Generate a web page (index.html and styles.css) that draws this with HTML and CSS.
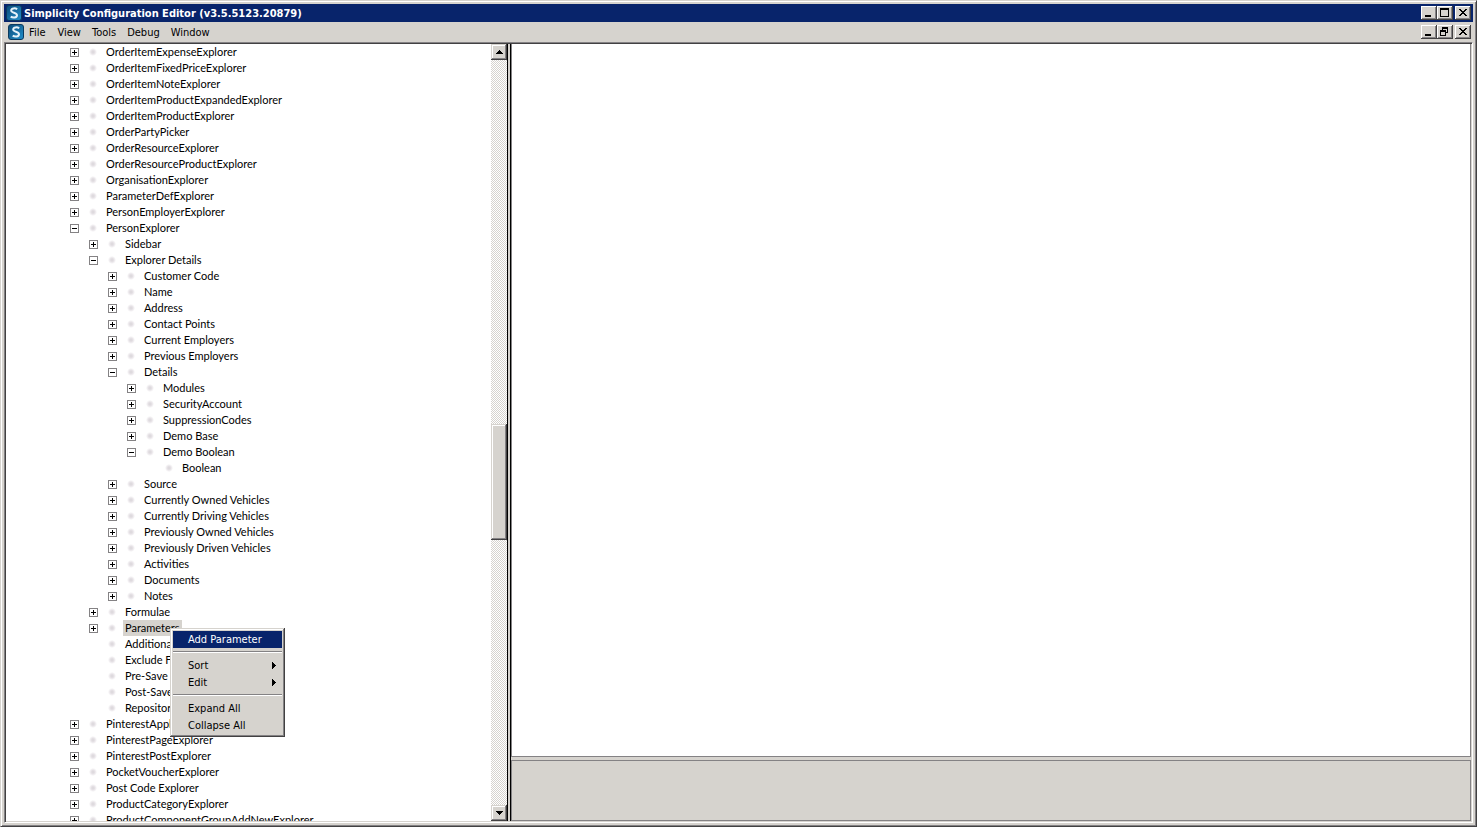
FILE: index.html
```html
<!DOCTYPE html>
<html lang="en">
<head>
    <meta charset="UTF-8">
    <meta name="viewport" content="width=device-width, initial-scale=1.0">
    <title>Simplicity Configuration Editor</title>
    <link rel="stylesheet" href="styles.css">
</head>
<body>
    <svg class="defs" width="0" height="0" aria-hidden="true">
        <linearGradient id="blue" x1="0" y1="0" x2="1" y2="1">
            <stop offset="0" stop-color="#0b4a78"/>
            <stop offset="1" stop-color="#2391cc"/>
        </linearGradient>
        <symbol id="logo" viewBox="0 0 16 16">
            <rect x="0.5" y="0.5" width="15" height="15" rx="2.5" fill="url(#blue)" stroke="#0c3a5e"/>
            <path d="M11.2 4.2C9.5 3 5.2 2.8 5.2 5.5C5.2 8.3 11 7.3 11 10.3C11 13.2 6.5 12.9 4.7 11.6" fill="none" stroke="#e4f2fa" stroke-width="2"/>
        </symbol>
        <symbol id="close" viewBox="0 0 12 10">
            <path d="M2 1h2v1h1v1h2V2h1V1h2v1H9v1H8v1H7v1h1v1h1v1h1v1H8V7H7V6H5v1H4v1H2V7h1V6h1V5h1V4H4V3H3V2H2z"/>
        </symbol>
    </svg>

    <div class="window">
        <header class="titlebar">
            <svg class="logo"><use href="#logo"/></svg>
            <h1 class="title">Simplicity Configuration Editor (v3.5.5123.20879)</h1>
            <div class="controls">
                <button class="control" aria-label="Minimize"><svg viewBox="0 0 12 10"><path d="M2 7h6v2H2z"/></svg></button>
                <button class="control" aria-label="Maximize"><svg viewBox="0 0 12 10"><path d="M1 0h9v9H1zM2 2v6h7V2z" fill-rule="evenodd"/></svg></button>
                <button class="control control-close" aria-label="Close"><svg><use href="#close"/></svg></button>
            </div>
        </header>

        <nav class="menubar">
            <svg class="logo"><use href="#logo"/></svg>
            <button class="menu">File</button>
            <button class="menu">View</button>
            <button class="menu">Tools</button>
            <button class="menu">Debug</button>
            <button class="menu">Window</button>
            <div class="controls">
                <button class="control" aria-label="Minimize child"><svg viewBox="0 0 12 10"><path d="M2 7h6v2H2z"/></svg></button>
                <button class="control" aria-label="Restore child"><svg viewBox="0 0 12 10"><path d="M3 0h6v6H7V5h1V2H4v1H3zM1 3h6v6H1zM2 5v3h4V5z" fill-rule="evenodd"/></svg></button>
                <button class="control control-close" aria-label="Close child"><svg><use href="#close"/></svg></button>
            </div>
        </nav>

        <main class="client">
            <section class="tree-pane">
                <ul class="tree">
                    <li><div class="row"><button class="toggle plus" aria-label="Expand"></button><i class="dot"></i><span class="label">OrderItemExpenseExplorer</span></div></li>
                    <li><div class="row"><button class="toggle plus" aria-label="Expand"></button><i class="dot"></i><span class="label">OrderItemFixedPriceExplorer</span></div></li>
                    <li><div class="row"><button class="toggle plus" aria-label="Expand"></button><i class="dot"></i><span class="label">OrderItemNoteExplorer</span></div></li>
                    <li><div class="row"><button class="toggle plus" aria-label="Expand"></button><i class="dot"></i><span class="label">OrderItemProductExpandedExplorer</span></div></li>
                    <li><div class="row"><button class="toggle plus" aria-label="Expand"></button><i class="dot"></i><span class="label">OrderItemProductExplorer</span></div></li>
                    <li><div class="row"><button class="toggle plus" aria-label="Expand"></button><i class="dot"></i><span class="label">OrderPartyPicker</span></div></li>
                    <li><div class="row"><button class="toggle plus" aria-label="Expand"></button><i class="dot"></i><span class="label">OrderResourceExplorer</span></div></li>
                    <li><div class="row"><button class="toggle plus" aria-label="Expand"></button><i class="dot"></i><span class="label">OrderResourceProductExplorer</span></div></li>
                    <li><div class="row"><button class="toggle plus" aria-label="Expand"></button><i class="dot"></i><span class="label">OrganisationExplorer</span></div></li>
                    <li><div class="row"><button class="toggle plus" aria-label="Expand"></button><i class="dot"></i><span class="label">ParameterDefExplorer</span></div></li>
                    <li><div class="row"><button class="toggle plus" aria-label="Expand"></button><i class="dot"></i><span class="label">PersonEmployerExplorer</span></div></li>
                    <li>
                        <div class="row"><button class="toggle" aria-label="Collapse"></button><i class="dot"></i><span class="label">PersonExplorer</span></div>
                        <ul>
                            <li><div class="row"><button class="toggle plus" aria-label="Expand"></button><i class="dot"></i><span class="label">Sidebar</span></div></li>
                            <li>
                                <div class="row"><button class="toggle" aria-label="Collapse"></button><i class="dot"></i><span class="label">Explorer Details</span></div>
                                <ul>
                                    <li><div class="row"><button class="toggle plus" aria-label="Expand"></button><i class="dot"></i><span class="label">Customer Code</span></div></li>
                                    <li><div class="row"><button class="toggle plus" aria-label="Expand"></button><i class="dot"></i><span class="label">Name</span></div></li>
                                    <li><div class="row"><button class="toggle plus" aria-label="Expand"></button><i class="dot"></i><span class="label">Address</span></div></li>
                                    <li><div class="row"><button class="toggle plus" aria-label="Expand"></button><i class="dot"></i><span class="label">Contact Points</span></div></li>
                                    <li><div class="row"><button class="toggle plus" aria-label="Expand"></button><i class="dot"></i><span class="label">Current Employers</span></div></li>
                                    <li><div class="row"><button class="toggle plus" aria-label="Expand"></button><i class="dot"></i><span class="label">Previous Employers</span></div></li>
                                    <li>
                                        <div class="row"><button class="toggle" aria-label="Collapse"></button><i class="dot"></i><span class="label">Details</span></div>
                                        <ul>
                                            <li><div class="row"><button class="toggle plus" aria-label="Expand"></button><i class="dot"></i><span class="label">Modules</span></div></li>
                                            <li><div class="row"><button class="toggle plus" aria-label="Expand"></button><i class="dot"></i><span class="label">SecurityAccount</span></div></li>
                                            <li><div class="row"><button class="toggle plus" aria-label="Expand"></button><i class="dot"></i><span class="label">SuppressionCodes</span></div></li>
                                            <li><div class="row"><button class="toggle plus" aria-label="Expand"></button><i class="dot"></i><span class="label">Demo Base</span></div></li>
                                            <li>
                                                <div class="row"><button class="toggle" aria-label="Collapse"></button><i class="dot"></i><span class="label">Demo Boolean</span></div>
                                                <ul>
                                                    <li><div class="row leaf"><i class="dot"></i><span class="label">Boolean</span></div></li>
                                                </ul>
                                            </li>
                                        </ul>
                                    </li>
                                    <li><div class="row"><button class="toggle plus" aria-label="Expand"></button><i class="dot"></i><span class="label">Source</span></div></li>
                                    <li><div class="row"><button class="toggle plus" aria-label="Expand"></button><i class="dot"></i><span class="label">Currently Owned Vehicles</span></div></li>
                                    <li><div class="row"><button class="toggle plus" aria-label="Expand"></button><i class="dot"></i><span class="label">Currently Driving Vehicles</span></div></li>
                                    <li><div class="row"><button class="toggle plus" aria-label="Expand"></button><i class="dot"></i><span class="label">Previously Owned Vehicles</span></div></li>
                                    <li><div class="row"><button class="toggle plus" aria-label="Expand"></button><i class="dot"></i><span class="label">Previously Driven Vehicles</span></div></li>
                                    <li><div class="row"><button class="toggle plus" aria-label="Expand"></button><i class="dot"></i><span class="label">Activities</span></div></li>
                                    <li><div class="row"><button class="toggle plus" aria-label="Expand"></button><i class="dot"></i><span class="label">Documents</span></div></li>
                                    <li><div class="row"><button class="toggle plus" aria-label="Expand"></button><i class="dot"></i><span class="label">Notes</span></div></li>
                                </ul>
                            </li>
                            <li><div class="row"><button class="toggle plus" aria-label="Expand"></button><i class="dot"></i><span class="label">Formulae</span></div></li>
                            <li class="has-popup">
                                <div class="row"><button class="toggle plus" aria-label="Expand"></button><i class="dot"></i><span class="label selected">Parameters</span></div>
                                <div class="popup">
                                    <button class="item active">Add Parameter</button>
                                    <hr>
                                    <button class="item">Sort<svg class="arrow" viewBox="0 0 4 7"><path d="M0 0h1v1h1v1h1v1h1v1H3v1H2v1H1v1H0z"/></svg></button>
                                    <button class="item">Edit<svg class="arrow" viewBox="0 0 4 7"><path d="M0 0h1v1h1v1h1v1h1v1H3v1H2v1H1v1H0z"/></svg></button>
                                    <hr>
                                    <button class="item">Expand All</button>
                                    <button class="item">Collapse All</button>
                                </div>
                            </li>
                            <li><div class="row leaf"><i class="dot"></i><span class="label">Additional</span></div></li>
                            <li><div class="row leaf"><i class="dot"></i><span class="label">Exclude From</span></div></li>
                            <li><div class="row leaf"><i class="dot"></i><span class="label">Pre-Save</span></div></li>
                            <li><div class="row leaf"><i class="dot"></i><span class="label">Post-Save</span></div></li>
                            <li><div class="row leaf"><i class="dot"></i><span class="label">Repository</span></div></li>
                        </ul>
                    </li>
                    <li><div class="row"><button class="toggle plus" aria-label="Expand"></button><i class="dot"></i><span class="label">PinterestApplExplorer</span></div></li>
                    <li><div class="row"><button class="toggle plus" aria-label="Expand"></button><i class="dot"></i><span class="label">PinterestPageExplorer</span></div></li>
                    <li><div class="row"><button class="toggle plus" aria-label="Expand"></button><i class="dot"></i><span class="label">PinterestPostExplorer</span></div></li>
                    <li><div class="row"><button class="toggle plus" aria-label="Expand"></button><i class="dot"></i><span class="label">PocketVoucherExplorer</span></div></li>
                    <li><div class="row"><button class="toggle plus" aria-label="Expand"></button><i class="dot"></i><span class="label">Post Code Explorer</span></div></li>
                    <li><div class="row"><button class="toggle plus" aria-label="Expand"></button><i class="dot"></i><span class="label">ProductCategoryExplorer</span></div></li>
                    <li><div class="row"><button class="toggle plus" aria-label="Expand"></button><i class="dot"></i><span class="label">ProductComponentGroupAddNewExplorer</span></div></li>
                </ul>
                <div class="scrollbar">
                    <button class="scroll-button" aria-label="Scroll up"><svg viewBox="0 0 7 4"><path d="M3 0h1v1h1v1h1v1h1v1H0V3h1V2h1V1h1z"/></svg></button>
                    <div class="track-above"></div>
                    <div class="thumb"></div>
                    <div class="track-below"></div>
                    <button class="scroll-button" aria-label="Scroll down"><svg viewBox="0 0 7 4"><path d="M0 0h7v1H6v1H5v1H4v1H3V3H2V2H1V1H0z"/></svg></button>
                </div>
            </section>
            <div class="splitter"></div>
            <section class="right-pane">
                <div class="editor"></div>
                <div class="info"></div>
            </section>
        </main>
    </div>
</body>
</html>
```

FILE: styles.css
```css
* {
    box-sizing: border-box;
}

body {
    margin: 0;
    background: #d6d3ce;
    color: #000;
    font-family: Lato, Arial, sans-serif;
    font-size: 11px;
}

button {
    margin: 0;
    padding: 0;
    border: 0;
    background: none;
    color: inherit;
    font: inherit;
}

svg {
    display: block;
    shape-rendering: crispEdges;
}

ul {
    margin: 0;
    padding: 0;
    list-style: none;
}

.defs {
    position: absolute;
}

/* Window frame */
.window {
    display: flex;
    flex-direction: column;
    height: 100vh;
    padding: 3px;
    border: 1px solid;
    border-color: #d6d3ce #424142 #424142 #d6d3ce;
    box-shadow: inset 1px 1px #fff, inset -1px -1px #848284;
}

.titlebar,
.menubar {
    display: flex;
    align-items: center;
    flex: none;
    padding: 0 2px;
    font-family: "DejaVu Sans Condensed", Tahoma, sans-serif;
}

.titlebar {
    height: 18px;
    background: #08246b;
    color: #fff;
}

.menubar {
    height: 20px;
}

.logo {
    flex: none;
    width: 16px;
    height: 16px;
    shape-rendering: auto;
}

.menubar .logo {
    margin: 0 -1px 0 2px;
}

.title {
    margin: 0 0 0 2px;
    font-size: 11px;
    font-weight: bold;
    white-space: nowrap;
}

.menu {
    height: 18px;
    padding: 0 6px 0 5px;
}

.menubar .logo + .menu {
    padding: 0 7px 0 6px;
}

.controls {
    display: flex;
    margin-left: auto;
}

.control {
    width: 16px;
    height: 14px;
    padding: 2px;
    background: #d6d3ce;
    box-shadow: inset -1px -1px #424142, inset 1px 1px #fff, inset -2px -2px #848284;
}

.control-close {
    margin-left: 2px;
}

.control svg {
    width: 12px;
    height: 10px;
}

/* Client area */
.client {
    display: flex;
    flex: 1;
    min-height: 0;
    border: 1px solid;
    border-color: #848284 #fff #fff #848284;
    box-shadow: inset 1px 1px #424142, inset -1px -1px #d6d3ce;
    padding: 1px;
}

.tree-pane {
    display: flex;
    flex: 0 0 34.2%;
    min-width: 0;
    background: #fff;
}

.tree {
    flex: 1;
    min-width: 0;
    padding-left: 64px;
    overflow: hidden;
}

.tree ul {
    padding-left: 19px;
}

.row {
    display: flex;
    align-items: center;
    height: 16px;
}

.leaf {
    padding-left: 9px;
}

.toggle {
    flex: none;
    width: 9px;
    height: 9px;
    border: 1px solid #848284;
    background: linear-gradient(#000, #000) center / 5px 1px no-repeat;
}

.plus {
    background:
        linear-gradient(#000, #000) center / 5px 1px no-repeat,
        linear-gradient(#000, #000) center / 1px 5px no-repeat;
}

.dot {
    flex: none;
    width: 16px;
    height: 16px;
    margin: 0 3px 0 6px;
    background: radial-gradient(circle, #dedade 1px, #e8e4e8 2px, #fff 4px);
}

.label {
    padding: 0 2px;
    line-height: 16px;
    white-space: nowrap;
}

.selected {
    background: #d6d3ce;
}

/* Scroll bar */
.scrollbar {
    display: flex;
    flex-direction: column;
    flex: none;
    width: 16px;
    background: repeating-conic-gradient(#d6d3ce 0 25%, #fff 0 50%) 0 0 / 2px 2px;
}

.scroll-button,
.thumb {
    background: #d6d3ce;
    box-shadow: inset -1px -1px #424142, inset 1px 1px #d6d3ce, inset -2px -2px #848284, inset 2px 2px #fff;
}

.scroll-button {
    display: flex;
    align-items: center;
    justify-content: center;
    height: 16px;
}

.scroll-button svg {
    width: 7px;
    height: 4px;
}

.track-above {
    flex: 364;
}

.thumb {
    flex: 116;
}

.track-below {
    flex: 265;
}

.splitter {
    flex: none;
    width: 4px;
    border: solid #000;
    border-width: 0 1px;
    background: #d6d3ce;
}

.right-pane {
    display: flex;
    flex: 1;
    flex-direction: column;
    gap: 3px;
}

.editor,
.info {
    border: 1px solid #848284;
}

.editor {
    flex: 1;
    border-top: 0;
    background: #fff;
}

.info {
    height: 61px;
}

/* Context menu */
.has-popup {
    position: relative;
}

.popup {
    position: absolute;
    z-index: 1;
    top: 8px;
    left: 81px;
    width: 115px;
    padding: 3px;
    background: #d6d3ce;
    box-shadow: inset -1px -1px #424142, inset 1px 1px #d6d3ce, inset -2px -2px #848284, inset 2px 2px #fff;
    font-family: "DejaVu Sans Condensed", Tahoma, sans-serif;
}

.popup hr {
    height: 2px;
    margin: 3px 0 4px;
    border: 0;
    border-top: 1px solid #848284;
    border-bottom: 1px solid #fff;
}

.item {
    display: flex;
    align-items: center;
    justify-content: space-between;
    width: 100%;
    height: 17px;
    padding: 0 6px 0 15px;
    white-space: nowrap;
}

.active {
    background: #08246b;
    color: #fff;
}

.arrow {
    width: 4px;
    height: 7px;
}
```
